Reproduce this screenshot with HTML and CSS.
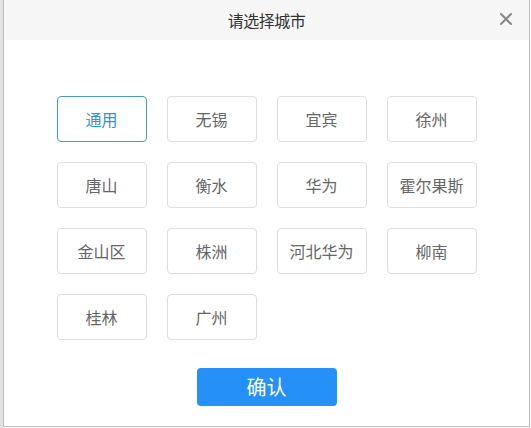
FILE: index.html
```html
<!DOCTYPE html>
<html lang="zh-CN">
<head>
<meta charset="utf-8">
<title>请选择城市</title>
<link rel="stylesheet" href="styles.css">
</head>
<body>
<div class="page">
  <div class="dialog">
    <div class="header">
      <span class="title">请选择城市</span>
      <span class="close" aria-label="关闭">
        <svg width="12" height="12" viewBox="0 0 12 12"><path d="M1 1 L11 11 M11 1 L1 11" stroke="#888" stroke-width="2" stroke-linecap="square" fill="none"/></svg>
      </span>
    </div>
    <div class="body">
      <div class="grid">
        <div class="city active">通用</div>
        <div class="city">无锡</div>
        <div class="city">宜宾</div>
        <div class="city">徐州</div>
        <div class="city">唐山</div>
        <div class="city">衡水</div>
        <div class="city">华为</div>
        <div class="city">霍尔果斯</div>
        <div class="city">金山区</div>
        <div class="city">株洲</div>
        <div class="city">河北华为</div>
        <div class="city">柳南</div>
        <div class="city">桂林</div>
        <div class="city">广州</div>
      </div>
      <div class="actions">
        <button class="confirm">确认</button>
      </div>
    </div>
  </div>
</div>
</body>
</html>
```

FILE: styles.css
```css
html, body {
  margin: 0;
  padding: 0;
  background: #ffffff;
  font-family: "Noto Sans CJK SC", "Noto Sans", sans-serif;
}

.page {
  width: 531px;
  height: 428px;
  background: linear-gradient(to right, #e2e2e2 0, #e2e2e2 3px, #ffffff 3px);
  box-sizing: border-box;
  padding-left: 3px;
}

.dialog {
  width: 527px;
  height: 427px;
  box-sizing: border-box;
  border: 1px solid #bdbdbd;
  border-top: none;
  background: #ffffff;
  display: flex;
  flex-direction: column;
}

.header {
  height: 40px;
  background: #f6f6f6;
  display: flex;
  align-items: center;
  justify-content: center;
  position: relative;
  flex: none;
}

.title {
  font-size: 16px;
  color: #333333;
  line-height: 1;
  letter-spacing: -0.5px;
}

.close {
  position: absolute;
  right: 17px;
  top: 13px;
  width: 12px;
  height: 12px;
  display: flex;
}

.body {
  padding-top: 56px;
  display: flex;
  flex-direction: column;
  align-items: center;
}

.grid {
  display: grid;
  grid-template-columns: repeat(4, 90px);
  grid-auto-rows: 46px;
  gap: 20px;
}

.city {
  box-sizing: border-box;
  border: 1px solid #dddddd;
  border-radius: 4px;
  display: flex;
  align-items: center;
  justify-content: center;
  font-size: 16px;
  color: #666666;
  line-height: 1;
}

.city.active {
  border-color: #4a98c8;
  color: #3791d2;
}

.actions {
  margin-top: 28px;
  display: flex;
  justify-content: center;
}

.confirm {
  width: 140px;
  height: 38px;
  border: none;
  border-radius: 4px;
  background: #2590f8;
  color: #ffffff;
  font-family: "Noto Sans CJK SC", "Noto Sans", sans-serif;
  font-size: 20px;
  line-height: 1;
  padding: 0;
}
```
